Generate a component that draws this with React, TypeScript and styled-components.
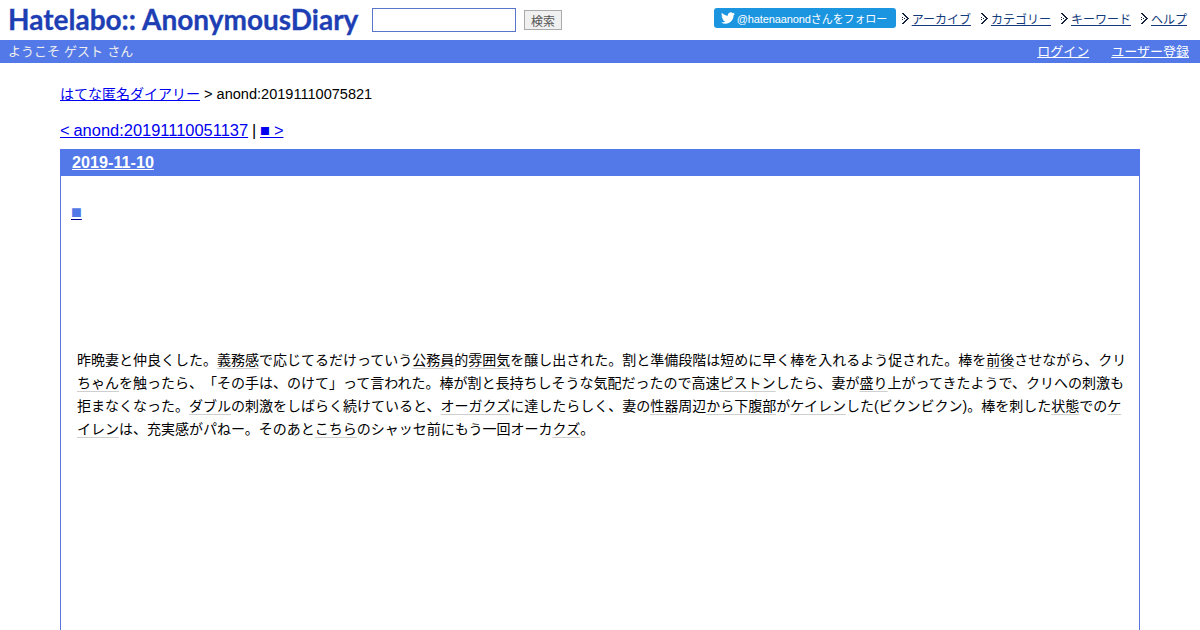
import { createGlobalStyle } from 'styled-components';
import styled from 'styled-components';

const GlobalStyle = createGlobalStyle`
  html, body {
    margin: 0;
    padding: 0;
    background: #fff;
  }
  body {
    height: 630px;
    overflow: hidden;
    font-family: 'Liberation Sans', 'Noto Sans CJK JP', sans-serif;
    color: #000;
    text-spacing-trim: space-all;
  }
`;

const menuItems = ['アーカイブ', 'カテゴリー', 'キーワード', 'ヘルプ'];

const ArrowIcon = () => (
  <svg width="7" height="11" viewBox="0 0 7 11" shapeRendering="crispEdges">
    <path
      fill="#16233f"
      d="M0 0h2v1H0zM1 1h2v1H1zM2 2h2v1H2zM3 3h2v1H3zM4 4h2v1H4zM5 5h2v1H5zM4 6h2v1H4zM3 7h2v1H3zM2 8h2v1H2zM1 9h2v1H1zM0 10h2v1H0zM0 4h1v1H0zM2 5h1v1H2zM0 6h1v1H0z"
    />
  </svg>
);

const TwitterBird = () => (
  <svg width="14" height="14" viewBox="0 0 24 24">
    <path
      fill="#fff"
      d="M23.950 4.570a10 10 0 0 1-2.820.770 4.960 4.960 0 0 0 2.160-2.720c-.950.550-2 .950-3.130 1.180a4.920 4.920 0 0 0-8.380 4.480C7.690 8.090 4.070 6.130 1.640 3.160a4.820 4.820 0 0 0-.660 2.470c0 1.710.870 3.210 2.190 4.100a4.900 4.900 0 0 1-2.230-.620v.060a4.920 4.920 0 0 0 3.950 4.830 5 5 0 0 1-2.210.080 4.940 4.940 0 0 0 4.600 3.420A9.870 9.870 0 0 1 0 19.540a14 14 0 0 0 7.560 2.210c9.050 0 14-7.500 14-13.980 0-.210 0-.420-.020-.630a9.940 9.940 0 0 0 2.460-2.550z"
    />
  </svg>
);

export default function App() {
  return (
    <>
      <GlobalStyle />
      <Header>
        <HeaderLeft>
          <Logo>
            Hatelabo::<LogoWord>AnonymousDiary</LogoWord>
          </Logo>
          <SearchInput />
          <SearchButton>検索</SearchButton>
        </HeaderLeft>
        <HeaderRight>
          <FollowButton>
            <TwitterBird />
            @hatenaanondさんをフォロー
          </FollowButton>
          {menuItems.map((item) => (
            <MenuItem key={item}>
              <ArrowIcon />
              <MenuLink href="#">{item}</MenuLink>
            </MenuItem>
          ))}
        </HeaderRight>
      </Header>

      <UserBar>
        <span>ようこそ ゲスト さん</span>
        <UserLinks>
          <a href="#">ログイン</a>
          <a href="#">ユーザー登録</a>
        </UserLinks>
      </UserBar>

      <Main>
        <Breadcrumb>
          <RootLink href="#">はてな匿名ダイアリー</RootLink> &gt; anond:20191110075821
        </Breadcrumb>
        <Pager>
          <a href="#">&lt; anond:20191110051137</a> | <a href="#">■ &gt;</a>
        </Pager>
        <Section>
          <DateTitle>
            <a href="#">2019-11-10</a>
          </DateTitle>
          <EntryTitle>
            <a href="#">
              <EntryMark>■</EntryMark>
            </a>
          </EntryTitle>
          <Body>
            昨晩妻と仲良くした。<Keyword>義務感</Keyword>で応じてるだけっていう<Keyword>公務員</Keyword>的
            <Keyword>雰囲気</Keyword>を醸し出された。割と準備段階は短めに早く棒を入れるよう促された。棒を
            <Keyword>前後</Keyword>させながら、クリ<Keyword>ちゃん</Keyword>を触ったら、「その手は、のけて」って言われた。棒が割と長持ちしそうな気配だったので高速
            <Keyword>ピストン</Keyword>したら、妻が<Keyword>盛り</Keyword>上がってきたようで、クリへの刺激も拒まなくなった。
            <Keyword>ダブル</Keyword>の刺激をしばらく続けていると、<Keyword>オーガクズ</Keyword>に達したらしく、妻の
            <Keyword>性器</Keyword>周辺<Keyword>から</Keyword>
            <Keyword>下腹部</Keyword>が<Keyword>ケイレン</Keyword>した(ビクンビクン)。棒を刺した
            <Keyword>状態</Keyword>での<Keyword>ケイレン</Keyword>は、充実感がパねー。そのあと<Keyword>こちら</Keyword>のシャッセ前にもう一回オーカ
            <Keyword>クズ</Keyword>。
          </Body>
        </Section>
      </Main>
    </>
  );
}

const Header = styled.header`
  display: flex;
  align-items: flex-start;
  justify-content: space-between;
  height: 40px;
  padding: 0 13px 0 8px;
`;

const HeaderLeft = styled.div`
  display: flex;
  align-items: center;
  height: 40px;
`;

const Logo = styled.div`
  width: 350px;
  margin-bottom: 2px;
  font-family: 'Lato', sans-serif;
  font-weight: 700;
  font-size: 28px;
  line-height: 38px;
  white-space: nowrap;
  color: #1e3fb4;
  -webkit-text-stroke: 0.3px #1e3fb4;
`;

const LogoWord = styled.span`
  margin-left: 6px;
`;

const SearchInput = styled.input`
  box-sizing: border-box;
  width: 144px;
  height: 24px;
  margin-left: 14px;
  border: 1px solid #5a76c8;
  background: #fff;
`;

const SearchButton = styled.button`
  box-sizing: border-box;
  width: 38px;
  height: 20px;
  margin-left: 8px;
  padding: 0;
  border: 1px solid #aaa;
  background: #f0f0f0;
  color: #555;
  font-family: inherit;
  font-size: 12px;
`;

const HeaderRight = styled.nav`
  display: flex;
  align-items: center;
  padding-top: 8px;
`;

const FollowButton = styled.div`
  display: flex;
  align-items: center;
  gap: 2px;
  box-sizing: border-box;
  width: 182px;
  height: 20px;
  padding: 0 0 0 7px;
  border-radius: 3px;
  background: #1b95e0;
  color: #fff;
  font-size: 11px;
  letter-spacing: -0.1px;
  white-space: nowrap;
`;

const MenuItem = styled.div`
  display: flex;
  align-items: center;
  gap: 3px;
  margin-left: 10px;
  &:nth-child(2) {
    margin-left: 6px;
  }
`;

const MenuLink = styled.a`
  color: #123a7c;
  font-size: 12px;
`;

const UserBar = styled.div`
  display: flex;
  align-items: center;
  justify-content: space-between;
  box-sizing: border-box;
  height: 23px;
  padding: 0 11px 2px 8px;
  background: #5279e7;
  color: #eee;
  font-size: 13px;
  word-spacing: 0.5px;

  a {
    color: #fff;
  }
`;

const UserLinks = styled.div`
  display: flex;
  gap: 22px;
`;

const Main = styled.main`
  padding: 21px 60px 0;
`;

const Breadcrumb = styled.div`
  font-size: 14.56px;
  line-height: 20px;
`;

const RootLink = styled.a`
  font-size: 14px;
`;

const Pager = styled.div`
  margin-top: 16px;
  font-size: 16.45px;
  word-spacing: -0.7px;
  line-height: 20px;
`;

const Section = styled.section`
  margin-top: 9px;
  height: 600px;
  border: 1px solid #5a76dc;
  border-top: none;
`;

const DateTitle = styled.h2`
  margin: 0 -1px;
  height: 27px;
  padding-left: 12px;
  background: #5279e7;
  font-size: 16.2px;
  line-height: 27px;

  a {
    color: #fff;
  }
`;

const EntryTitle = styled.h3`
  margin: 26px 0 0 10px;
  font-size: 18px;
  line-height: 20px;
  font-weight: 400;

  a {
    color: #00008b;
  }
`;

const EntryMark = styled.span`
  color: #5279e7;
`;

const Body = styled.p`
  margin: 127px 12px 0 16px;
  font-size: 14px;
  line-height: 23px;
`;

const Keyword = styled.span`
  text-decoration: underline 1px #cfcfcf;
  text-underline-offset: 3px;
  text-decoration-skip-ink: none;
`;
